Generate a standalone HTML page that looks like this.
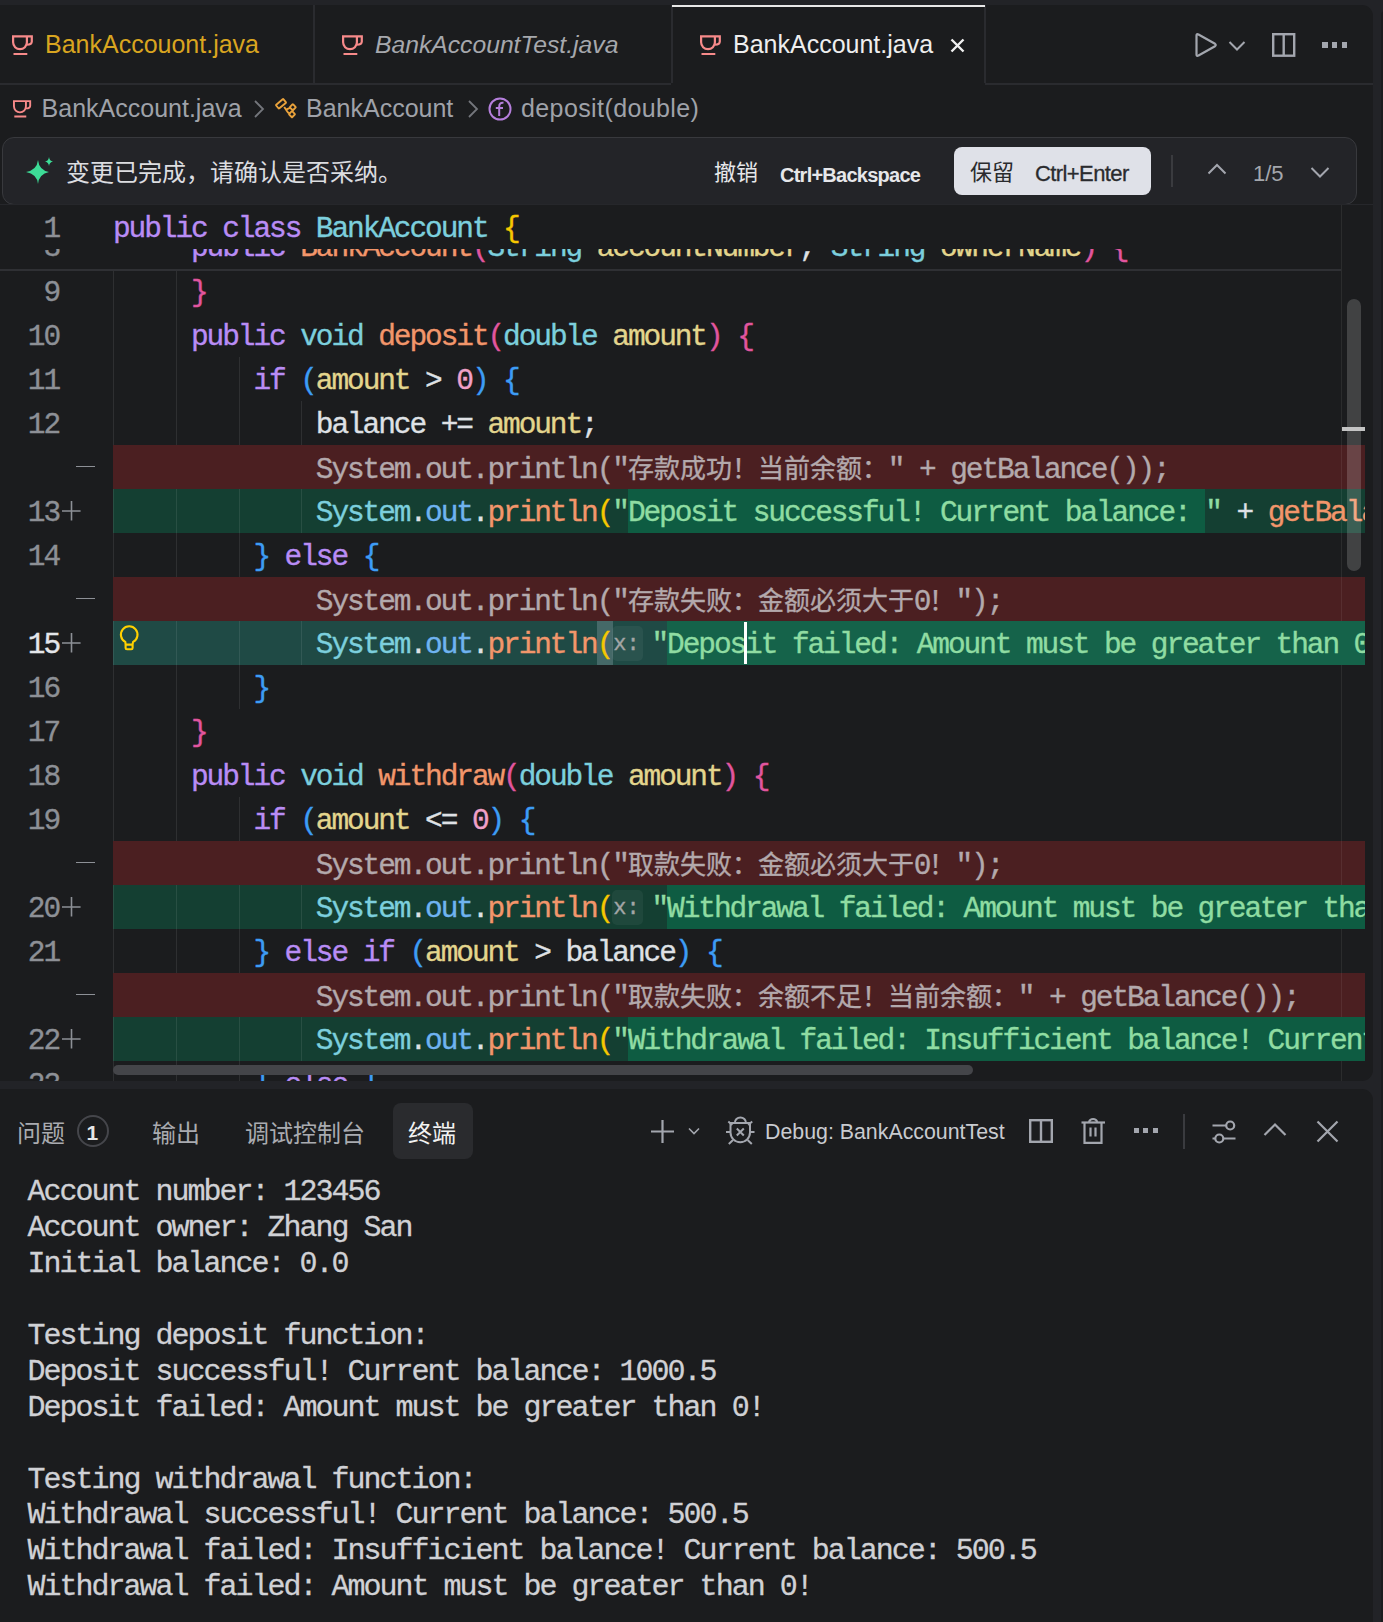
<!DOCTYPE html>
<html lang="zh-CN"><head><meta charset="utf-8"><style>
*{margin:0;padding:0;box-sizing:border-box}
html,body{width:1383px;height:1622px;overflow:hidden;background:#222327;font-family:"Liberation Sans",sans-serif}
.a{position:absolute}
.t{position:absolute;white-space:pre;font-family:"Liberation Sans",sans-serif;line-height:1}
.m{position:absolute;white-space:pre;font-family:"Liberation Mono",monospace;font-size:29.5px;letter-spacing:-2.100px;line-height:44px;height:44px;-webkit-text-stroke-width:0.35px}
.cj{display:inline-block;letter-spacing:0;font-family:"Liberation Sans",sans-serif;font-size:26px;overflow:visible;text-align:left}
.tm{position:absolute;white-space:pre;font-family:"Liberation Mono",monospace;font-size:30px;letter-spacing:-2.000px;line-height:1;color:#d0d1d5;left:27.5px;-webkit-text-stroke-width:0.3px}
svg{position:absolute;overflow:visible}

.inl{display:inline-block;position:relative;width:39.2px;height:44px;vertical-align:top;letter-spacing:0}
.inlb{position:absolute;left:0;top:3px;width:31px;height:35px;border-radius:5px;background:rgba(255,255,255,0.05)}
.inlt{position:absolute;left:1px;top:0;font-size:22px;letter-spacing:0;color:#a3a6a6;line-height:44px}
</style></head>
<body>
<div class="a" style="left:0px;top:5px;width:1373px;height:1076px;background:#1b1c1e;border-top-right-radius:11px;border-bottom-right-radius:11px"></div><div class="a" style="left:0px;top:1089px;width:1373px;height:533px;background:#1b1c1e;border-top-right-radius:11px"></div><div class="a" style="left:1381px;top:11px;width:4px;height:1611px;background:#1b1c1e;border-top-left-radius:6px"></div><div class="a" style="left:0px;top:83px;width:671px;height:2px;background:#2a2b2f;"></div><div class="a" style="left:985px;top:83px;width:388px;height:2px;background:#2a2b2f;"></div><div class="a" style="left:313px;top:5px;width:2px;height:78px;background:#2a2b2f;"></div><div class="a" style="left:671px;top:5px;width:2px;height:78px;background:#2a2b2f;"></div><div class="a" style="left:984px;top:5px;width:2px;height:78px;background:#2a2b2f;"></div><div class="a" style="left:672px;top:5px;width:313px;height:2px;background:#e8e8e8;"></div><svg style="left:12px;top:35px" width="22.0" height="21.0" viewBox="0 0 22 21"><path d="M0 1.3 H20.9 M19.8 0.5 V6.5 Q19.8 9.6 14.9 9.6 M1.1 0.5 V7.3 A6.9 6.9 0 0 0 14.9 7.3 V1.3 M1.5 19 H15.3" fill="none" stroke="#f78a8a" stroke-width="2.2"/></svg><div class="t" style="left:45px;top:32.44px;font-size:25px;color:#d9a520;font-weight:400;font-style:normal;">BankAccouont.java</div><svg style="left:342px;top:35px" width="22.0" height="21.0" viewBox="0 0 22 21"><path d="M0 1.3 H20.9 M19.8 0.5 V6.5 Q19.8 9.6 14.9 9.6 M1.1 0.5 V7.3 A6.9 6.9 0 0 0 14.9 7.3 V1.3 M1.5 19 H15.3" fill="none" stroke="#f78a8a" stroke-width="2.2"/></svg><div class="t" style="left:375px;top:32.69px;font-size:24.7px;color:#a6a8ad;font-weight:400;font-style:italic;">BankAccountTest.java</div><svg style="left:700px;top:35px" width="22.0" height="21.0" viewBox="0 0 22 21"><path d="M0 1.3 H20.9 M19.8 0.5 V6.5 Q19.8 9.6 14.9 9.6 M1.1 0.5 V7.3 A6.9 6.9 0 0 0 14.9 7.3 V1.3 M1.5 19 H15.3" fill="none" stroke="#f78a8a" stroke-width="2.2"/></svg><div class="t" style="left:733px;top:32.44px;font-size:25px;color:#eeeeee;font-weight:400;font-style:normal;">BankAccount.java</div><svg style="left:950px;top:38px" width="15" height="15" viewBox="0 0 15 15"><path d="M1.5 1.5 L13.5 13.5 M13.5 1.5 L1.5 13.5" stroke="#f0f0f0" stroke-width="2.4"/></svg><svg style="left:1194px;top:32px" width="24" height="26" viewBox="0 0 24 26"><path d="M2.5 3.5 Q2.5 1.5 4.5 2.5 L21 11.8 Q22.5 13 21 14.2 L4.5 23.5 Q2.5 24.5 2.5 22.5 Z" fill="none" stroke="#a3a6ae" stroke-width="2.2" stroke-linejoin="round"/></svg><svg style="left:1228px;top:40px" width="18" height="12" viewBox="0 0 18 12"><path d="M1.5 2 L9 9.5 L16.5 2" fill="none" stroke="#a3a6ae" stroke-width="2"/></svg><svg style="left:1272px;top:33px" width="25" height="26" viewBox="0 0 25 26"><rect x="1.2" y="1.2" width="21" height="21.5" fill="none" stroke="#a3a6ae" stroke-width="2.4"/><path d="M11.7 1.5 V23" stroke="#a3a6ae" stroke-width="2.4"/></svg><div class="a" style="left:1322.0px;top:42.2px;width:5.6px;height:5.6px;background:#a3a6ae;"></div><div class="a" style="left:1331.8px;top:42.2px;width:5.6px;height:5.6px;background:#a3a6ae;"></div><div class="a" style="left:1341.6px;top:42.2px;width:5.6px;height:5.6px;background:#a3a6ae;"></div><svg style="left:12.5px;top:100px" width="19.1" height="18.3" viewBox="0 0 22 21"><path d="M0 1.3 H20.9 M19.8 0.5 V6.5 Q19.8 9.6 14.9 9.6 M1.1 0.5 V7.3 A6.9 6.9 0 0 0 14.9 7.3 V1.3 M1.5 19 H15.3" fill="none" stroke="#f78a8a" stroke-width="2.2"/></svg><div class="t" style="left:41.6px;top:95.64px;font-size:25px;color:#9fa2a9;font-weight:400;font-style:normal;">BankAccount.java</div><svg style="left:253px;top:99px" width="12" height="20" viewBox="0 0 12 20"><path d="M2 2 L10 10 L2 18" fill="none" stroke="#74767c" stroke-width="1.8"/></svg><svg style="left:276px;top:99px" width="22" height="20" viewBox="0 0 22 20"><g fill="none" stroke="#e9a23b" stroke-width="1.9"><rect x="0.2" y="2.4" width="9.6" height="4.8" rx="0.6" transform="rotate(-40 5 4.8)"/><path d="M8.2 8 L12 13.6 L14.2 14.6 M10 10.6 L14.6 8.6"/><rect x="14.6" y="6" width="4.4" height="4.4" rx="0.5" transform="rotate(45 16.8 8.2)"/><rect x="13.8" y="13" width="4.4" height="4.4" rx="0.5" transform="rotate(45 16 15.2)"/></g></svg><div class="t" style="left:306px;top:95.64px;font-size:25px;color:#9fa2a9;font-weight:400;font-style:normal;">BankAccount</div><svg style="left:467px;top:99px" width="12" height="20" viewBox="0 0 12 20"><path d="M2 2 L10 10 L2 18" fill="none" stroke="#74767c" stroke-width="1.8"/></svg><svg style="left:488px;top:97px" width="24" height="24" viewBox="0 0 24 24"><circle cx="12" cy="12" r="10.5" fill="none" stroke="#b57fdc" stroke-width="2"/><path d="M15.5 5.8 Q11.2 5.2 11.2 9.5 V19 M7.8 11 H15" fill="none" stroke="#b57fdc" stroke-width="2"/></svg><div class="t" style="left:521px;top:95.64px;font-size:25px;color:#9fa2a9;font-weight:400;font-style:normal;letter-spacing:0.4px">deposit(double)</div><div class="a" style="left:2px;top:137px;width:1355px;height:68px;background:#232428;border:1.5px solid #38393d;border-radius:12px"></div><svg style="left:25px;top:156px" width="30" height="30" viewBox="0 0 30 30"><path d="M13 4 Q14 14 24 16 Q14 18 13 28 Q12 18 1 16 Q12 14 13 4 Z" fill="#3ddc97"/><path d="M24 1 Q24.5 5 28 5.5 Q24.5 6 24 10 Q23.5 6 20 5.5 Q23.5 5 24 1 Z" fill="#3ddc97"/></svg><div class="t" style="left:66px;top:161.18px;font-size:24px;color:#dcdde0;font-weight:400;font-style:normal;">变更已完成，请确认是否采纳。</div><div class="t" style="left:714px;top:162.38px;font-size:22px;color:#e6e7ea;font-weight:400;font-style:normal;">撤销</div><div class="t" style="left:780px;top:164.57px;font-size:20px;color:#e6e7ea;font-weight:700;font-style:normal;letter-spacing:-0.75px">Ctrl+Backspace</div><div class="a" style="left:954px;top:147px;width:197px;height:48px;background:#dfe1e8;border-radius:8px"></div><div class="t" style="left:970px;top:162.38px;font-size:22px;color:#2a2b2e;font-weight:400;font-style:normal;">保留</div><div class="t" style="left:1035px;top:162.88px;font-size:22px;color:#2a2b2e;font-weight:400;font-style:normal;letter-spacing:-0.6px;-webkit-text-stroke:0.3px #2a2b2e">Ctrl+Enter</div><div class="a" style="left:1171px;top:155px;width:2px;height:32px;background:#3a3b3f;"></div><svg style="left:1207px;top:163px" width="20" height="13" viewBox="0 0 20 13"><path d="M1.5 10.5 L10 2 L18.5 10.5" fill="none" stroke="#a3a6ae" stroke-width="2"/></svg><div class="t" style="left:1253px;top:163.38px;font-size:22px;color:#a4a7ad;font-weight:400;font-style:normal;">1/5</div><svg style="left:1310px;top:166px" width="20" height="13" viewBox="0 0 20 13"><path d="M1.5 2 L10 10.5 L18.5 2" fill="none" stroke="#a3a6ae" stroke-width="2"/></svg><div class="t" style="left:17px;top:1122.18px;font-size:24px;color:#a9abb0;font-weight:400;font-style:normal;">问题</div><div class="a" style="left:77px;top:1115px;width:32px;height:32px;border:2px solid #45464b;border-radius:50%"></div><div class="t" style="left:86.5px;top:1122.22px;font-size:21px;color:#e6e6e6;font-weight:700;font-style:normal;">1</div><div class="t" style="left:152px;top:1122.18px;font-size:24px;color:#a9abb0;font-weight:400;font-style:normal;">输出</div><div class="t" style="left:245px;top:1122.18px;font-size:24px;color:#a9abb0;font-weight:400;font-style:normal;">调试控制台</div><div class="a" style="left:393px;top:1103px;width:80px;height:56px;background:#2a2b2e;border-radius:8px"></div><div class="t" style="left:408px;top:1122.18px;font-size:24px;color:#f2f2f2;font-weight:400;font-style:normal;">终端</div><svg style="left:650px;top:1119px" width="25" height="25" viewBox="0 0 25 25"><path d="M12.5 1 V24 M1 12.5 H24" stroke="#a3a6ae" stroke-width="2.2"/></svg><svg style="left:688px;top:1127px" width="12" height="8" viewBox="0 0 12 8"><path d="M1 1.5 L6 6.5 L11 1.5" fill="none" stroke="#a3a6ae" stroke-width="1.6"/></svg><svg style="left:726px;top:1117px" width="29" height="29" viewBox="0 0 29 29"><g fill="none" stroke="#a3a6ae" stroke-width="2"><path d="M8.8 6 A5.6 5.6 0 0 1 20 6"/><path d="M4.5 6 H24 V15.5 A9.75 9.75 0 0 1 4.5 15.5 Z"/><path d="M10.8 11.5 L17.8 18.5 M17.8 11.5 L10.8 18.5"/><path d="M0 15 H4.5 M24 15 H28.5 M2.3 4.6 L6.3 8 M26.2 4.6 L22.2 8 M2.8 27 L7 23 M25.8 27 L21.6 23"/></g></svg><div class="t" style="left:765px;top:1122.23px;font-size:21.35px;color:#c9cbd0;font-weight:400;font-style:normal;">Debug: BankAccountTest</div><svg style="left:1029px;top:1119px" width="24" height="24" viewBox="0 0 24 24"><rect x="1.2" y="1.2" width="21.6" height="21.6" fill="none" stroke="#a3a6ae" stroke-width="2.4"/><path d="M12 1.2 V22.8" stroke="#a3a6ae" stroke-width="2.4"/></svg><svg style="left:1081px;top:1117px" width="25" height="28" viewBox="0 0 25 28"><g fill="none" stroke="#a3a6ae" stroke-width="2.2"><path d="M0.5 5.5 H24"/><path d="M8 5 A4.3 4.3 0 0 1 16.2 5"/><path d="M3.5 5.5 V25.8 H20.5 V5.5"/><path d="M9.5 10.5 V19.5 M14.5 10.5 V19.5"/></g></svg><div class="a" style="left:1133.5px;top:1128.3px;width:5.2px;height:5px;background:#a3a6ae;"></div><div class="a" style="left:1143.1px;top:1128.3px;width:5.2px;height:5px;background:#a3a6ae;"></div><div class="a" style="left:1152.7px;top:1128.3px;width:5.2px;height:5px;background:#a3a6ae;"></div><div class="a" style="left:1183px;top:1114px;width:2px;height:35px;background:#3a3b3f;"></div><svg style="left:1211px;top:1119px" width="26" height="25" viewBox="0 0 26 25"><g fill="none" stroke="#a3a6ae" stroke-width="2.2"><path d="M1.5 6.5 H15 M12 19.5 H24.5 M1.5 19.5 H4.5"/><circle cx="19.2" cy="6.5" r="4"/><circle cx="8.3" cy="19.5" r="4"/></g></svg><svg style="left:1263px;top:1122px" width="24" height="15" viewBox="0 0 24 15"><path d="M1.5 13 L12 2.5 L22.5 13" fill="none" stroke="#a3a6ae" stroke-width="2.2"/></svg><svg style="left:1316px;top:1120px" width="23" height="23" viewBox="0 0 23 23"><path d="M1.5 1.5 L21.5 21.5 M21.5 1.5 L1.5 21.5" stroke="#a3a6ae" stroke-width="2.2"/></svg><div class="tm" style="top:1176.52px">Account number: 123456</div><div class="tm" style="top:1212.52px">Account owner: Zhang San</div><div class="tm" style="top:1248.52px">Initial balance: 0.0</div><div class="tm" style="top:1320.52px">Testing deposit function:</div><div class="tm" style="top:1356.52px">Deposit successful! Current balance: 1000.5</div><div class="tm" style="top:1392.52px">Deposit failed: Amount must be greater than 0!</div><div class="tm" style="top:1464.52px">Testing withdrawal function:</div><div class="tm" style="top:1500.02px">Withdrawal successful! Current balance: 500.5</div><div class="tm" style="top:1536.02px">Withdrawal failed: Insufficient balance! Current balance: 500.5</div><div class="tm" style="top:1572.02px">Withdrawal failed: Amount must be greater than 0!</div>
<div class="a" style="left:0;top:205px;width:1365px;height:876px;overflow:hidden"><div class="a" style="left:113px;top:64px;width:1px;height:44px;background:rgba(255,255,255,0.085)"></div><div class="a" style="left:176px;top:64px;width:1px;height:44px;background:rgba(255,255,255,0.085)"></div><div class="a" style="left:113px;top:108px;width:1px;height:44px;background:rgba(255,255,255,0.085)"></div><div class="a" style="left:176px;top:108px;width:1px;height:44px;background:rgba(255,255,255,0.085)"></div><div class="a" style="left:113px;top:152px;width:1px;height:44px;background:rgba(255,255,255,0.085)"></div><div class="a" style="left:176px;top:152px;width:1px;height:44px;background:rgba(255,255,255,0.085)"></div><div class="a" style="left:238.5px;top:152px;width:1px;height:44px;background:rgba(255,255,255,0.085)"></div><div class="a" style="left:113px;top:196px;width:1px;height:44px;background:rgba(255,255,255,0.085)"></div><div class="a" style="left:176px;top:196px;width:1px;height:44px;background:rgba(255,255,255,0.085)"></div><div class="a" style="left:238.5px;top:196px;width:1px;height:44px;background:rgba(255,255,255,0.085)"></div><div class="a" style="left:301px;top:196px;width:1px;height:44px;background:rgba(255,255,255,0.085)"></div><div class="a" style="left:113px;top:240px;width:1252px;height:44px;background:#4b1f21"></div><div class="a" style="left:113px;top:284px;width:1252px;height:44px;background:#143f32"></div><div class="a" style="left:113px;top:284px;width:1px;height:44px;background:rgba(255,255,255,0.085)"></div><div class="a" style="left:176px;top:284px;width:1px;height:44px;background:rgba(255,255,255,0.085)"></div><div class="a" style="left:238.5px;top:284px;width:1px;height:44px;background:rgba(255,255,255,0.085)"></div><div class="a" style="left:301px;top:284px;width:1px;height:44px;background:rgba(255,255,255,0.085)"></div><div class="a" style="left:113px;top:328px;width:1px;height:44px;background:rgba(255,255,255,0.085)"></div><div class="a" style="left:176px;top:328px;width:1px;height:44px;background:rgba(255,255,255,0.085)"></div><div class="a" style="left:238.5px;top:328px;width:1px;height:44px;background:rgba(255,255,255,0.085)"></div><div class="a" style="left:113px;top:372px;width:1252px;height:44px;background:#4b1f21"></div><div class="a" style="left:113px;top:416px;width:1252px;height:44px;background:#1f4a45"></div><div class="a" style="left:113px;top:416px;width:1px;height:44px;background:rgba(255,255,255,0.085)"></div><div class="a" style="left:176px;top:416px;width:1px;height:44px;background:rgba(255,255,255,0.085)"></div><div class="a" style="left:238.5px;top:416px;width:1px;height:44px;background:rgba(255,255,255,0.085)"></div><div class="a" style="left:301px;top:416px;width:1px;height:44px;background:rgba(255,255,255,0.085)"></div><div class="a" style="left:113px;top:460px;width:1px;height:44px;background:rgba(255,255,255,0.085)"></div><div class="a" style="left:176px;top:460px;width:1px;height:44px;background:rgba(255,255,255,0.085)"></div><div class="a" style="left:238.5px;top:460px;width:1px;height:44px;background:rgba(255,255,255,0.085)"></div><div class="a" style="left:113px;top:504px;width:1px;height:44px;background:rgba(255,255,255,0.085)"></div><div class="a" style="left:176px;top:504px;width:1px;height:44px;background:rgba(255,255,255,0.085)"></div><div class="a" style="left:113px;top:548px;width:1px;height:44px;background:rgba(255,255,255,0.085)"></div><div class="a" style="left:176px;top:548px;width:1px;height:44px;background:rgba(255,255,255,0.085)"></div><div class="a" style="left:113px;top:592px;width:1px;height:44px;background:rgba(255,255,255,0.085)"></div><div class="a" style="left:176px;top:592px;width:1px;height:44px;background:rgba(255,255,255,0.085)"></div><div class="a" style="left:238.5px;top:592px;width:1px;height:44px;background:rgba(255,255,255,0.085)"></div><div class="a" style="left:113px;top:636px;width:1252px;height:44px;background:#4b1f21"></div><div class="a" style="left:113px;top:680px;width:1252px;height:44px;background:#143f32"></div><div class="a" style="left:113px;top:680px;width:1px;height:44px;background:rgba(255,255,255,0.085)"></div><div class="a" style="left:176px;top:680px;width:1px;height:44px;background:rgba(255,255,255,0.085)"></div><div class="a" style="left:238.5px;top:680px;width:1px;height:44px;background:rgba(255,255,255,0.085)"></div><div class="a" style="left:301px;top:680px;width:1px;height:44px;background:rgba(255,255,255,0.085)"></div><div class="a" style="left:113px;top:724px;width:1px;height:44px;background:rgba(255,255,255,0.085)"></div><div class="a" style="left:176px;top:724px;width:1px;height:44px;background:rgba(255,255,255,0.085)"></div><div class="a" style="left:238.5px;top:724px;width:1px;height:44px;background:rgba(255,255,255,0.085)"></div><div class="a" style="left:113px;top:768px;width:1252px;height:44px;background:#4b1f21"></div><div class="a" style="left:113px;top:812px;width:1252px;height:44px;background:#143f32"></div><div class="a" style="left:113px;top:812px;width:1px;height:44px;background:rgba(255,255,255,0.085)"></div><div class="a" style="left:176px;top:812px;width:1px;height:44px;background:rgba(255,255,255,0.085)"></div><div class="a" style="left:238.5px;top:812px;width:1px;height:44px;background:rgba(255,255,255,0.085)"></div><div class="a" style="left:301px;top:812px;width:1px;height:44px;background:rgba(255,255,255,0.085)"></div><div class="a" style="left:113px;top:856px;width:1px;height:44px;background:rgba(255,255,255,0.085)"></div><div class="a" style="left:176px;top:856px;width:1px;height:44px;background:rgba(255,255,255,0.085)"></div><div class="a" style="left:238.5px;top:856px;width:1px;height:44px;background:rgba(255,255,255,0.085)"></div><div class="a" style="left:1341px;top:0;width:1px;height:876px;background:rgba(255,255,255,0.07)"></div><div class="a" style="left:627.80px;top:284px;width:577.20px;height:44px;background:#0e5c42"></div><div class="a" style="left:667.00px;top:416px;width:698.00px;height:44px;background:#15634a"></div><div class="a" style="left:667.00px;top:680px;width:698.00px;height:44px;background:#0e5c42"></div><div class="a" style="left:627.80px;top:812px;width:737.20px;height:44px;background:#0e5c42"></div><div class="a" style="left:597px;top:416px;width:16px;height:44px;background:#456968"></div><div class="m" style="left:191.00px;top:65.5px"><span style="color:#e1559e">}</span></div><div class="m ln" style="left:0;width:59px;text-align:right;top:65.5px;color:#8d9096">9</div><div class="m" style="left:191.00px;top:109.5px"><span style="color:#b98cf5">public</span><span style="color:#dfe1e5"> </span><span style="color:#7ccfdd">void</span><span style="color:#dfe1e5"> </span><span style="color:#f2966b">deposit</span><span style="color:#e1559e">(</span><span style="color:#7ccfdd">double</span><span style="color:#dfe1e5"> </span><span style="color:#e3d58d">amount</span><span style="color:#e1559e">)</span><span style="color:#dfe1e5"> </span><span style="color:#e1559e">{</span></div><div class="m ln" style="left:0;width:59px;text-align:right;top:109.5px;color:#8d9096">10</div><div class="m" style="left:253.40px;top:153.5px"><span style="color:#b98cf5">if</span><span style="color:#dfe1e5"> </span><span style="color:#3d9cf5">(</span><span style="color:#e3d58d">amount</span><span style="color:#dfe1e5"> &gt; </span><span style="color:#f0a0c8">0</span><span style="color:#3d9cf5">)</span><span style="color:#dfe1e5"> </span><span style="color:#3d9cf5">{</span></div><div class="m ln" style="left:0;width:59px;text-align:right;top:153.5px;color:#8d9096">11</div><div class="m" style="left:315.80px;top:197.5px"><span style="color:#dfe1e5">balance</span><span style="color:#dfe1e5"> += </span><span style="color:#e3d58d">amount</span><span style="color:#dfe1e5">;</span></div><div class="m ln" style="left:0;width:59px;text-align:right;top:197.5px;color:#8d9096">12</div><div class="m" style="left:315.80px;top:241.5px"><span style="color:#b3a9ac">System.out.println(&quot;<span class="cj" style="width:260px">存款成功！当前余额：</span>&quot; + getBalance());</span></div><div class="a" style="left:76px;top:260.5px;width:19px;height:1.6px;background:#8d9096"></div><div class="m" style="left:315.80px;top:285.5px"><span style="color:#7ccfdd">System</span><span style="color:#dfe1e5">.</span><span style="color:#6fb3f0">out</span><span style="color:#dfe1e5">.</span><span style="color:#f2966b">println</span><span style="color:#f6c700">(</span><span style="color:#8fdca2">&quot;</span><span style="color:#8fdca2">Deposit successful! Current balance: </span><span style="color:#8fdca2">&quot;</span><span style="color:#dfe1e5"> + </span><span style="color:#f2966b">getBalance</span><span style="color:#e1559e">()</span><span style="color:#dfe1e5">);</span></div><div class="m ln" style="left:0;width:59px;text-align:right;top:285.5px;color:#8d9096">13</div><svg style="left:62px;top:295.5px" width="19" height="20" viewBox="0 0 19 20"><path d="M9.5 0 V19.5 M0 10 H18.6" stroke="#8d9096" stroke-width="1.6"/></svg><div class="m" style="left:253.40px;top:329.5px"><span style="color:#3d9cf5">}</span><span style="color:#dfe1e5"> </span><span style="color:#b98cf5">else</span><span style="color:#dfe1e5"> </span><span style="color:#3d9cf5">{</span></div><div class="m ln" style="left:0;width:59px;text-align:right;top:329.5px;color:#8d9096">14</div><div class="m" style="left:315.80px;top:373.5px"><span style="color:#b3a9ac">System.out.println(&quot;<span class="cj" style="width:286px">存款失败：金额必须大于</span>0<span class="cj" style="width:26px">！</span>&quot;);</span></div><div class="a" style="left:76px;top:392.5px;width:19px;height:1.6px;background:#8d9096"></div><div class="m" style="left:315.80px;top:417.5px"><span style="color:#7ccfdd">System</span><span style="color:#dfe1e5">.</span><span style="color:#6fb3f0">out</span><span style="color:#dfe1e5">.</span><span style="color:#f2966b">println</span><span style="color:#f6c700">(</span><span class="inl"><span class="inlb"></span><span class="inlt">x:</span></span><span style="color:#8fdca2">&quot;</span><span style="color:#8fdca2">Deposit failed: Amount must be greater than 0!</span><span style="color:#8fdca2">&quot;</span><span style="color:#dfe1e5">);</span></div><div class="m ln" style="left:0;width:59px;text-align:right;top:417.5px;color:#e4e6ea">15</div><svg style="left:62px;top:427.5px" width="19" height="20" viewBox="0 0 19 20"><path d="M9.5 0 V19.5 M0 10 H18.6" stroke="#8d9096" stroke-width="1.6"/></svg><div class="m" style="left:253.40px;top:461.5px"><span style="color:#3d9cf5">}</span></div><div class="m ln" style="left:0;width:59px;text-align:right;top:461.5px;color:#8d9096">16</div><div class="m" style="left:191.00px;top:505.5px"><span style="color:#e1559e">}</span></div><div class="m ln" style="left:0;width:59px;text-align:right;top:505.5px;color:#8d9096">17</div><div class="m" style="left:191.00px;top:549.5px"><span style="color:#b98cf5">public</span><span style="color:#dfe1e5"> </span><span style="color:#7ccfdd">void</span><span style="color:#dfe1e5"> </span><span style="color:#f2966b">withdraw</span><span style="color:#e1559e">(</span><span style="color:#7ccfdd">double</span><span style="color:#dfe1e5"> </span><span style="color:#e3d58d">amount</span><span style="color:#e1559e">)</span><span style="color:#dfe1e5"> </span><span style="color:#e1559e">{</span></div><div class="m ln" style="left:0;width:59px;text-align:right;top:549.5px;color:#8d9096">18</div><div class="m" style="left:253.40px;top:593.5px"><span style="color:#b98cf5">if</span><span style="color:#dfe1e5"> </span><span style="color:#3d9cf5">(</span><span style="color:#e3d58d">amount</span><span style="color:#dfe1e5"> &lt;= </span><span style="color:#f0a0c8">0</span><span style="color:#3d9cf5">)</span><span style="color:#dfe1e5"> </span><span style="color:#3d9cf5">{</span></div><div class="m ln" style="left:0;width:59px;text-align:right;top:593.5px;color:#8d9096">19</div><div class="m" style="left:315.80px;top:637.5px"><span style="color:#b3a9ac">System.out.println(&quot;<span class="cj" style="width:286px">取款失败：金额必须大于</span>0<span class="cj" style="width:26px">！</span>&quot;);</span></div><div class="a" style="left:76px;top:656.5px;width:19px;height:1.6px;background:#8d9096"></div><div class="m" style="left:315.80px;top:681.5px"><span style="color:#7ccfdd">System</span><span style="color:#dfe1e5">.</span><span style="color:#6fb3f0">out</span><span style="color:#dfe1e5">.</span><span style="color:#f2966b">println</span><span style="color:#f6c700">(</span><span class="inl"><span class="inlb"></span><span class="inlt">x:</span></span><span style="color:#8fdca2">&quot;</span><span style="color:#8fdca2">Withdrawal failed: Amount must be greater than 0!</span><span style="color:#8fdca2">&quot;</span><span style="color:#dfe1e5">);</span></div><div class="m ln" style="left:0;width:59px;text-align:right;top:681.5px;color:#8d9096">20</div><svg style="left:62px;top:691.5px" width="19" height="20" viewBox="0 0 19 20"><path d="M9.5 0 V19.5 M0 10 H18.6" stroke="#8d9096" stroke-width="1.6"/></svg><div class="m" style="left:253.40px;top:725.5px"><span style="color:#3d9cf5">}</span><span style="color:#dfe1e5"> </span><span style="color:#b98cf5">else</span><span style="color:#dfe1e5"> </span><span style="color:#b98cf5">if</span><span style="color:#dfe1e5"> </span><span style="color:#3d9cf5">(</span><span style="color:#e3d58d">amount</span><span style="color:#dfe1e5"> &gt; </span><span style="color:#dfe1e5">balance</span><span style="color:#3d9cf5">)</span><span style="color:#dfe1e5"> </span><span style="color:#3d9cf5">{</span></div><div class="m ln" style="left:0;width:59px;text-align:right;top:725.5px;color:#8d9096">21</div><div class="m" style="left:315.80px;top:769.5px"><span style="color:#b3a9ac">System.out.println(&quot;<span class="cj" style="width:390px">取款失败：余额不足！当前余额：</span>&quot; + getBalance());</span></div><div class="a" style="left:76px;top:788.5px;width:19px;height:1.6px;background:#8d9096"></div><div class="m" style="left:315.80px;top:813.5px"><span style="color:#7ccfdd">System</span><span style="color:#dfe1e5">.</span><span style="color:#6fb3f0">out</span><span style="color:#dfe1e5">.</span><span style="color:#f2966b">println</span><span style="color:#f6c700">(</span><span style="color:#8fdca2">&quot;</span><span style="color:#8fdca2">Withdrawal failed: Insufficient balance! Current balance: </span><span style="color:#8fdca2">&quot;</span><span style="color:#dfe1e5"> + </span><span style="color:#f2966b">getBalance</span><span style="color:#e1559e">()</span><span style="color:#dfe1e5">);</span></div><div class="m ln" style="left:0;width:59px;text-align:right;top:813.5px;color:#8d9096">22</div><svg style="left:62px;top:823.5px" width="19" height="20" viewBox="0 0 19 20"><path d="M9.5 0 V19.5 M0 10 H18.6" stroke="#8d9096" stroke-width="1.6"/></svg><div class="m" style="left:253.40px;top:857.5px"><span style="color:#3d9cf5">}</span><span style="color:#dfe1e5"> </span><span style="color:#b98cf5">else</span><span style="color:#dfe1e5"> </span><span style="color:#3d9cf5">{</span></div><div class="m ln" style="left:0;width:59px;text-align:right;top:857.5px;color:#8d9096">23</div><div class="a" style="left:744px;top:417px;width:3px;height:42px;background:#ffffff"></div><svg style="left:119px;top:419.79999999999995px" width="21" height="26" viewBox="0 0 21 26"><path d="M6.3 16.9 A8.3 8.3 0 1 1 14.1 16.9 L13.6 19.3 V23 Q13.6 24.3 12.2 24.3 H8 Q6.6 24.3 6.6 23 V19.3 Z M6.6 19.6 H13.6" fill="none" stroke="#ffd000" stroke-width="2.1" stroke-linejoin="round"/></svg><div class="a" style="left:113px;top:860px;width:860px;height:10px;border-radius:5px;background:#444549"></div></div><div class="a" style="left:0;top:205px;width:1341px;height:64px;background:#1b1c1e;overflow:hidden"><div class="m" style="left:191.00px;top:20.8px"><span style="color:#b98cf5">public</span><span style="color:#dfe1e5"> </span><span style="color:#f2966b">BankAccount</span><span style="color:#e1559e">(</span><span style="color:#7ccfdd">String</span><span style="color:#dfe1e5"> </span><span style="color:#e3d58d">accountNumber</span><span style="color:#dfe1e5">, </span><span style="color:#7ccfdd">String</span><span style="color:#dfe1e5"> </span><span style="color:#e3d58d">ownerName</span><span style="color:#e1559e">)</span><span style="color:#dfe1e5"> </span><span style="color:#e1559e">{</span></div><div class="m ln" style="left:0;width:59px;text-align:right;top:20.8px;color:#8d9096">3</div><div class="a" style="left:0;top:0;width:1341px;height:44px;background:#1b1c1e"></div><div class="m" style="left:113.00px;top:1.5px"><span style="color:#b98cf5">public</span><span style="color:#dfe1e5"> </span><span style="color:#b98cf5">class</span><span style="color:#dfe1e5"> </span><span style="color:#7ccfdd">BankAccount</span><span style="color:#dfe1e5"> </span><span style="color:#f6c700">{</span></div><div class="m ln" style="left:0;width:59px;text-align:right;top:1.5px;color:#8d9096">1</div></div><div class="a" style="left:0;top:269px;width:1341px;height:1.5px;background:#2f3034"></div><div class="a" style="left:0;top:204px;width:1373px;height:1px;background:#26272b"></div><div class="a" style="left:1347px;top:299px;width:14px;height:272px;border-radius:7px;background:rgba(255,255,255,0.17)"></div><div class="a" style="left:1342px;top:427px;width:23px;height:4px;background:#c4c4c4"></div>
</body></html>
